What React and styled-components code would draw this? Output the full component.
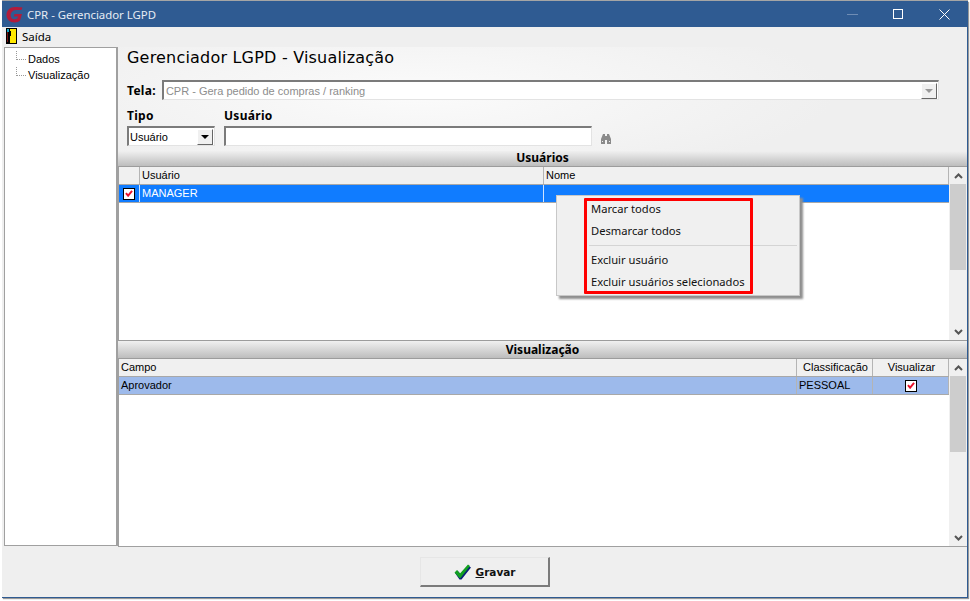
import React from 'react';
import styled, { createGlobalStyle } from 'styled-components';

const uiFont = '"Noto Sans", "DejaVu Sans", sans-serif';
const gridFont = '"Liberation Sans", Arial, sans-serif';

const GlobalStyle = createGlobalStyle`
  html, body {
    margin: 0;
    padding: 0;
    background: #fff;
  }
  body {
    font-family: ${gridFont};
    font-size: 11px;
    color: #000;
  }
`;

const Page = styled.div`
  width: 970px;
  height: 601px;
  padding: 1px 2px 3px 2px;
  box-sizing: border-box;
  background: #fff;
  overflow: hidden;
`;

const Window = styled.div`
  position: relative;
  height: 100%;
  display: flex;
  flex-direction: column;
  background: #efefef;
  border-right: 1px solid #2f5b92;
  border-bottom: 1px solid #2f5b92;
  box-shadow: 1px 1px 1px #999, 0 -1px 0 #a5a5a5;
  box-sizing: border-box;
`;

const TitleBar = styled.div`
  height: 26px;
  flex: none;
  display: flex;
  align-items: center;
  background: #2f5b92;
  color: #e6ecf4;
  font-family: ${uiFont};
  font-size: 11.4px;
  padding-left: 4px;
`;

const TitleText = styled.span`
  margin-left: 4px;
`;

const Controls = styled.div`
  margin-left: auto;
  display: flex;
`;

const ControlButton = styled.div`
  width: 46px;
  height: 26px;
  display: flex;
  align-items: center;
  justify-content: center;
`;

const MenuBar = styled.div`
  height: 20px;
  flex: none;
  display: flex;
  align-items: center;
  padding: 0 0 2px 4px;
  box-sizing: border-box;
  gap: 5px;
  font-family: ${uiFont};
  font-size: 11.5px;
`;

const Main = styled.div`
  flex: 1;
  display: flex;
  min-height: 0;
  padding-left: 2px;
`;

const Tree = styled.div`
  width: 114px;
  flex: none;
  box-sizing: border-box;
  height: 499px;
  background: #fff;
  border: 1px solid #a0a0a0;
  border-right: 2px solid #a0a0a0;
  padding: 3px 0 0 11px;
`;

const TreeRow = styled.div`
  height: 16px;
  display: flex;
  align-items: center;
  line-height: 16px;
`;

const TreeLine = styled.span`
  width: 9px;
  height: 8px;
  margin-right: 2px;
  border-left: 1px dotted #999;
  border-bottom: 1px dotted #999;
  position: relative;
  top: -4px;
`;

const Content = styled.div`
  flex: 1;
  min-width: 0;
  display: flex;
  flex-direction: column;
`;

const FormArea = styled.div`
  height: 104px;
  flex: none;
  box-sizing: border-box;
  padding: 0 0 0 9px;
  background: radial-gradient(ellipse 420px 90px at 35% 45%, #fbfbfb 0%, #efefef 100%);
`;

const Heading = styled.h1`
  margin: 0;
  padding-top: 1px;
  height: 29px;
  line-height: 19px;
  font-family: "DejaVu Sans", sans-serif;
  font-weight: 400;
  font-size: 16px;
  letter-spacing: 0.2px;
`;

const TelaRow = styled.div`
  display: flex;
  align-items: center;
  height: 20px;
  margin-top: 3px;
  gap: 6px;
`;

const FieldLabel = styled.label`
  font-family: ${uiFont};
  font-weight: 700;
  font-size: 12px;
  letter-spacing: 0.3px;
  line-height: 15px;
  display: block;
`;

const TelaInput = styled.div`
  width: 777px;
  height: 20px;
  box-sizing: border-box;
  display: flex;
  align-items: center;
  justify-content: space-between;
  background: #fff;
  border-top: 2px solid #7b7b7b;
  border-left: 2px solid #7b7b7b;
  border-bottom: 1px solid #e3e3e3;
  border-right: 1px solid #e3e3e3;
  color: #8d8d8d;
  padding-left: 2px;
`;

const ComboButton = styled.div`
  width: 16px;
  height: 16px;
  box-sizing: border-box;
  background: #f0f0f0;
  border: 1px solid #fff;
  border-right-color: #666;
  border-bottom-color: #666;
  display: flex;
  align-items: center;
  justify-content: center;
  margin-right: 1px;
`;

const Arrow = styled.span`
  width: 0;
  height: 0;
  border-left: 4px solid transparent;
  border-right: 4px solid transparent;
  border-top: 4px solid ${p => (p.$disabled ? '#999' : '#000')};
`;

const FilterRow = styled.div`
  display: flex;
  margin-top: 8px;
`;

const FilterField = styled.div`
  width: ${p => p.$width}px;
  flex: none;
`;

const Select = styled.div`
  width: 88px;
  height: 20px;
  box-sizing: border-box;
  display: flex;
  align-items: center;
  justify-content: space-between;
  background: #fff;
  border-top: 2px solid #7b7b7b;
  border-left: 2px solid #7b7b7b;
  border-bottom: 1px solid #e3e3e3;
  border-right: 1px solid #e3e3e3;
  padding-left: 1px;
  margin-top: 3px;
`;

const TextInput = styled.div`
  width: 368px;
  height: 20px;
  box-sizing: border-box;
  background: #fff;
  border-top: 2px solid #7b7b7b;
  border-left: 2px solid #7b7b7b;
  border-bottom: 1px solid #e3e3e3;
  border-right: 1px solid #e3e3e3;
  margin-top: 3px;
`;

const SearchIcon = styled.div`
  align-self: flex-end;
  margin: 0 0 2px 8px;
  display: flex;
`;

const Band = styled.div`
  height: ${p => p.$height}px;
  flex: none;
  box-sizing: border-box;
  text-align: center;
  font-family: ${uiFont};
  font-weight: 700;
  font-size: 12px;
  line-height: ${p => p.$height - 2}px;
  background: linear-gradient(#f0f0f0, #bdbdbd);
  border-bottom: 1px solid #9c9c9c;
  border-top: ${p => (p.$ruled ? '1px solid #9c9c9c' : 'none')};
`;

const GridWrap = styled.div`
  height: ${p => p.$height}px;
  flex: none;
  display: flex;
  background: #fff;
  box-sizing: border-box;
  border-left: 1px solid #a0a0a0;
`;

const GridBody = styled.div`
  flex: 1;
  min-width: 0;
`;

const Row = styled.div`
  display: grid;
  grid-template-columns: ${p => p.$columns};
  height: 18px;
  box-sizing: border-box;
  border-bottom: 1px solid #a8a8a8;
  background: ${p => p.$bg};
  color: ${p => p.$color || '#000'};
`;

const Cell = styled.div`
  padding-left: ${p => (p.$box ? 0 : 2)}px;
  line-height: 17px;
  white-space: nowrap;
  overflow: hidden;
  border-right: 1px solid ${p => p.$line || '#b4b4b4'};
  text-align: ${p => (p.$center ? 'center' : 'left')};
  display: ${p => (p.$box ? 'flex' : 'block')};
  align-items: center;
  justify-content: center;
`;

const CheckBox = styled.span`
  width: 10px;
  height: 10px;
  background: #fff;
  border: 1px solid #000;
  display: inline-flex;
  align-items: center;
  justify-content: center;
`;

const Scrollbar = styled.div`
  width: 18px;
  flex: none;
  display: flex;
  flex-direction: column;
  background: #f0f0f0;
`;

const ScrollButton = styled.div`
  height: 17px;
  flex: none;
  display: flex;
  align-items: center;
  justify-content: center;
`;

const ScrollThumb = styled.div`
  height: ${p => p.$height}px;
  flex: none;
  margin: 0 1px;
  background: #cdcdcd;
`;

const ScrollTrack = styled.div`
  flex: 1;
`;

const Footer = styled.div`
  flex: 1;
  display: flex;
  align-items: center;
  justify-content: center;
  margin-left: -116px;
  padding-left: 1px;
`;

const FooterRule = styled.div`
  height: 1px;
  flex: none;
  background: #a0a0a0;
`;

const SaveButton = styled.button`
  width: 130px;
  height: 30px;
  display: flex;
  align-items: center;
  justify-content: center;
  gap: 5px;
  background: #efefef;
  border: 1px solid #e6e6e6;
  border-right: 2px solid #7b7b7b;
  border-bottom: 2px solid #7b7b7b;
  font-family: "DejaVu Sans", sans-serif;
  font-weight: 700;
  font-size: 10.5px;
  padding: 0;
  color: #111;
`;

const ContextMenu = styled.div`
  position: absolute;
  left: 554px;
  top: 194px;
  width: 244px;
  height: 101px;
  box-sizing: border-box;
  background: #f0f0f0;
  border: 1px solid #c8c8c8;
  box-shadow: 3px 3px 2px #8f8f8f;
  padding: 2px 2px 0 2px;
  font-family: ${uiFont};
`;

const MenuItem = styled.div`
  height: 22px;
  line-height: 22px;
  padding-left: 32px;
  font-size: 11.2px;
  color: #111;
`;

const MenuSeparator = styled.div`
  height: 1px;
  background: #d4d4d4;
  margin: 3px 0 3px 30px;
`;

const Highlight = styled.div`
  position: absolute;
  left: 27px;
  top: 2px;
  width: 169px;
  height: 96px;
  box-sizing: border-box;
  border: 3px solid #f00;
  border-radius: 1px;
`;

const CheckMark = () => (
  <svg width="8" height="7" viewBox="0 0 9 8">
    <path d="M1 3.5 L3.5 6.5 L8 1" fill="none" stroke="#e8102a" strokeWidth="2.2" />
  </svg>
);

const Chevron = ({ down }) => (
  <svg width="9" height="6" viewBox="0 0 9 6">
    <path d={down ? 'M1 1 L4.5 4.5 L8 1' : 'M1 5 L4.5 1.5 L8 5'} fill="none" stroke="#555" strokeWidth="2" />
  </svg>
);

const Logo = () => (
  <svg width="17" height="17" viewBox="0 0 17 17">
    <path d="M9 1 C4 1 0.5 4.5 0.5 9 C0.5 13.5 4 16.5 8.5 16.5 C11 16.5 13 15.5 14 14.5 L16 8 H8.5 L7.8 10.5 H12 L11.4 12.6 C9 14 5.5 13.5 4.8 10.5 C4 7 6.5 4 10 4 H15.5 L16.5 1.5 C14.5 1.2 12 1 9 1 Z" fill="#b01c3c" />
  </svg>
);

const ExitIcon = () => (
  <svg width="11" height="16" viewBox="0 0 11 16">
    <rect width="11" height="16" fill="#000" />
    <rect x="4" y="1" width="6" height="14" fill="#ffe800" />
    <rect x="1" y="1" width="2" height="3" fill="#16a6c9" />
    <rect x="1" y="4" width="1" height="10" fill="#7a1010" />
    <rect x="4" y="3" width="1" height="5" fill="#000" />
  </svg>
);

const Binoculars = () => (
  <svg width="12" height="11" viewBox="0 0 12 11">
    <path d="M1 11 V6 L3 1 H5 V3 H7 V1 H9 L11 6 V11 H7 V7 H5 V11 Z" fill="#8a8a8a" />
    <rect x="2" y="8" width="1" height="1" fill="#eee" />
    <rect x="9" y="8" width="1" height="1" fill="#eee" />
  </svg>
);

const GreenCheck = () => (
  <svg width="17" height="16" viewBox="0 0 17 16">
    <path d="M1 9 L3.5 6.5 L6.5 10 L14 1.5 L17 3.5 L7.5 15.5 H5.5 Z" fill="#0a1f7a" />
    <path d="M0.5 8.5 L3 6 L6 9.5 L14 0.5 L16 2 L6.5 14 H5.5 Z" fill="#12a021" />
  </svg>
);

const USER_COLS = '21px 404px 1fr';
const VIEW_COLS = '678px 76px 1fr';

export default function App() {
  return (
    <Page>
      <GlobalStyle />
      <Window>
        <TitleBar>
          <Logo />
          <TitleText>CPR - Gerenciador LGPD</TitleText>
          <Controls>
            <ControlButton>
              <svg width="11" height="1"><rect width="11" height="1" fill="#6f8db5" /></svg>
            </ControlButton>
            <ControlButton>
              <svg width="10" height="10"><rect x="0.5" y="0.5" width="9" height="9" fill="none" stroke="#fff" /></svg>
            </ControlButton>
            <ControlButton>
              <svg width="11" height="11"><path d="M0.5 0.5 L10.5 10.5 M10.5 0.5 L0.5 10.5" stroke="#fff" fill="none" /></svg>
            </ControlButton>
          </Controls>
        </TitleBar>
        <MenuBar>
          <ExitIcon />
          <span>Saída</span>
        </MenuBar>
        <Main>
          <Tree>
            <TreeRow><TreeLine />Dados</TreeRow>
            <TreeRow><TreeLine />Visualização</TreeRow>
          </Tree>
          <Content>
            <FormArea>
              <Heading>Gerenciador LGPD - Visualização</Heading>
              <TelaRow>
                <FieldLabel>Tela:</FieldLabel>
                <TelaInput>
                  CPR - Gera pedido de compras / ranking
                  <ComboButton><Arrow $disabled /></ComboButton>
                </TelaInput>
              </TelaRow>
              <FilterRow>
                <FilterField $width={97}>
                  <FieldLabel>Tipo</FieldLabel>
                  <Select>
                    Usuário
                    <ComboButton><Arrow /></ComboButton>
                  </Select>
                </FilterField>
                <FilterField $width={368}>
                  <FieldLabel>Usuário</FieldLabel>
                  <TextInput />
                </FilterField>
                <SearchIcon><Binoculars /></SearchIcon>
              </FilterRow>
            </FormArea>
            <Band $height={16}>Usuários</Band>
            <GridWrap $height={173}>
              <GridBody>
                <Row $columns={USER_COLS} $bg="#f0f0f0">
                  <Cell />
                  <Cell>Usuário</Cell>
                  <Cell>Nome</Cell>
                </Row>
                <Row $columns={USER_COLS} $bg="#107cff" $color="#fff">
                  <Cell $box $line="#cfe3ff"><CheckBox><CheckMark /></CheckBox></Cell>
                  <Cell $line="#cfe3ff">MANAGER</Cell>
                  <Cell $line="#107cff" />
                </Row>
              </GridBody>
              <Scrollbar>
                <ScrollButton><Chevron /></ScrollButton>
                <ScrollThumb $height={86} />
                <ScrollTrack />
                <ScrollButton><Chevron down /></ScrollButton>
              </Scrollbar>
            </GridWrap>
            <Band $height={19} $ruled>Visualização</Band>
            <GridWrap $height={187}>
              <GridBody>
                <Row $columns={VIEW_COLS} $bg="#f0f0f0">
                  <Cell>Campo</Cell>
                  <Cell $center>Classificação</Cell>
                  <Cell $center>Visualizar</Cell>
                </Row>
                <Row $columns={VIEW_COLS} $bg="#9dbaeb">
                  <Cell>Aprovador</Cell>
                  <Cell>PESSOAL</Cell>
                  <Cell $box><CheckBox><CheckMark /></CheckBox></Cell>
                </Row>
              </GridBody>
              <Scrollbar>
                <ScrollButton><Chevron /></ScrollButton>
                <ScrollThumb $height={76} />
                <ScrollTrack />
                <ScrollButton><Chevron down /></ScrollButton>
              </Scrollbar>
            </GridWrap>
            <FooterRule />
            <Footer>
              <SaveButton>
                <GreenCheck />
                <span><u>G</u>ravar</span>
              </SaveButton>
            </Footer>
          </Content>
        </Main>
        <ContextMenu>
          <MenuItem>Marcar todos</MenuItem>
          <MenuItem>Desmarcar todos</MenuItem>
          <MenuSeparator />
          <MenuItem>Excluir usuário</MenuItem>
          <MenuItem>Excluir usuários selecionados</MenuItem>
          <Highlight />
        </ContextMenu>
      </Window>
    </Page>
  );
}
